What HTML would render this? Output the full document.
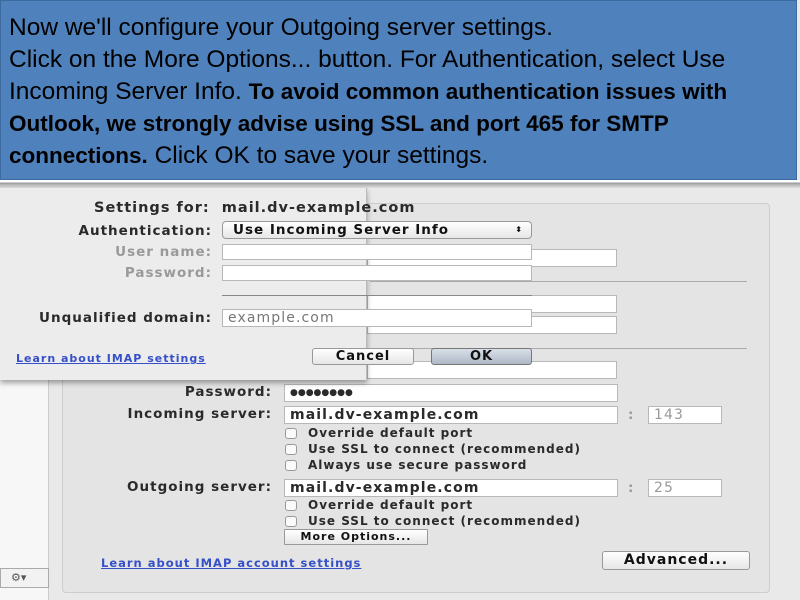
<!DOCTYPE html>
<html><head><style>
*{margin:0;padding:0;box-sizing:border-box}
body{width:800px;height:600px;overflow:hidden;background:#e9e9e9;font-family:"DejaVu Sans",sans-serif;position:relative}
.blue{position:absolute;left:0;top:0;width:797px;height:180px;background:#4f81bd;border:1px solid #3d6a9e;color:#000;font-family:"Liberation Sans",sans-serif;font-size:24.5px;line-height:32px;padding:11px 0 0 8px;white-space:nowrap}
.blue b{font-size:22.5px}
.bar{position:absolute;left:0;top:180px;width:800px;height:8px;background:linear-gradient(#fff 0,#fff 2px,#999 3px,#bbb 5px,#e0e0e0 8px)}
.a{position:absolute;font-size:13.5px;font-weight:bold;color:#2a2a2a;white-space:nowrap;letter-spacing:1px}
.r{text-align:right}
.f{position:absolute;background:#fff;border:1px solid #b8b8b8;height:18px;font-size:14px;font-weight:bold;padding-left:5px;line-height:16px;color:#2a2a2a;letter-spacing:1.1px;white-space:nowrap}
.cb{position:absolute;width:12px;height:11px;border:1px solid #999;border-radius:3px;background:#fafafa}
.ck{font-size:12px}
.btn{position:absolute;background:linear-gradient(#fff,#e6e6e6);border:1px solid #999;border-radius:3px;font-size:13px;font-weight:bold;text-align:center;color:#111;letter-spacing:1px;white-space:nowrap}
.lnk{position:absolute;font-size:11.5px;color:#3550c8;text-decoration:underline;font-weight:bold;letter-spacing:1px;white-space:nowrap}
</style></head><body>
<div class="blue">Now we'll configure your Outgoing server settings.<br>Click on the More Options... button. For Authentication, select Use<br>Incoming Server Info. <b>To avoid common authentication issues with<br>Outlook, we strongly advise using SSL and port 465 for SMTP<br>connections.</b> Click OK to save your settings.</div>
<div class="bar"></div>
<div style="position:absolute;left:0;top:188px;width:49px;height:412px;background:#f7f7f7;border-right:1px solid #ccc"></div>
<div style="position:absolute;left:0;top:568px;width:49px;height:20px;border:1px solid #aaa;background:#f2f2f2;font-size:11px;color:#555;padding:2px 0 0 10px">⚙▾</div>
<div style="position:absolute;left:62px;top:203px;width:708px;height:390px;background:#e4e4e4;border:1px solid #ccc;border-radius:4px"></div>
<div style="position:absolute;left:370px;top:281px;width:377px;border-top:1px solid #aaa"></div>
<div style="position:absolute;left:370px;top:348px;width:377px;border-top:1px solid #aaa"></div>
<div class="f" style="left:367px;top:249px;width:250px"></div>
<div class="f" style="left:367px;top:295px;width:250px"></div>
<div class="f" style="left:367px;top:316px;width:250px"></div>
<div class="f" style="left:367px;top:361px;width:250px"></div>
<div class="a r" style="left:60px;top:384px;width:212px">Password:</div>
<div class="f" style="left:284px;top:384px;width:334px;font-size:9px;letter-spacing:0">●●●●●●●●</div>
<div class="a r" style="left:40px;top:406px;width:232px">Incoming server:</div>
<div class="f" style="left:284px;top:406px;width:334px">mail.dv-example.com</div>
<div class="a" style="left:628px;top:407px;color:#999">:</div>
<div class="f" style="left:648px;top:406px;width:74px;color:#999;font-weight:normal">143</div>
<div class="cb" style="left:285px;top:428px"></div><div class="a ck" style="left:308px;top:426px">Override default port</div>
<div class="cb" style="left:285px;top:444px"></div><div class="a ck" style="left:308px;top:442px">Use SSL to connect (recommended)</div>
<div class="cb" style="left:285px;top:460px"></div><div class="a ck" style="left:308px;top:458px">Always use secure password</div>
<div class="a r" style="left:40px;top:479px;width:232px">Outgoing server:</div>
<div class="f" style="left:284px;top:479px;width:334px">mail.dv-example.com</div>
<div class="a" style="left:628px;top:480px;color:#999">:</div>
<div class="f" style="left:648px;top:479px;width:74px;color:#999;font-weight:normal">25</div>
<div class="cb" style="left:285px;top:500px"></div><div class="a ck" style="left:308px;top:498px">Override default port</div>
<div class="cb" style="left:285px;top:516px"></div><div class="a ck" style="left:308px;top:514px">Use SSL to connect (recommended)</div>
<div class="btn" style="left:284px;top:529px;width:144px;height:16px;font-size:11px;line-height:14px;border-radius:1px">More Options...</div>
<div class="lnk" style="left:101px;top:556px">Learn about IMAP account settings</div>
<div class="btn" style="left:602px;top:551px;width:148px;height:19px;line-height:17px;font-size:14px">Advanced...</div>
<div style="position:absolute;left:0;top:188px;width:367px;height:192px;background:#ececec;border-right:1px solid #bbb;box-shadow:0 3px 5px rgba(0,0,0,.35)"></div>
<div class="a" style="left:94px;top:200px;font-size:14.5px">Settings for:&nbsp; mail.dv-example.com</div>
<div class="a r" style="left:0px;top:223px;width:212px">Authentication:</div>
<div class="btn" style="left:222px;top:221px;width:310px;height:18px;text-align:left;padding-left:10px;line-height:16px;border-radius:4px;font-size:13.5px">Use Incoming Server Info<span style="position:absolute;right:8px;font-size:8px">⬍</span></div>
<div class="a r" style="left:0px;top:244px;width:212px;color:#999">User name:</div>
<div class="f" style="left:222px;top:244px;width:310px;height:16px"></div>
<div class="a r" style="left:0px;top:265px;width:212px;color:#999">Password:</div>
<div class="f" style="left:222px;top:265px;width:310px;height:16px"></div>
<div style="position:absolute;left:222px;top:295px;width:310px;border-top:1px solid #888"></div>
<div class="a r" style="left:0px;top:310px;width:212px">Unqualified domain:</div>
<div class="f" style="left:222px;top:309px;width:310px;color:#777;font-weight:normal">example.com</div>
<div class="lnk" style="left:16px;top:352px;font-size:11px">Learn about IMAP settings</div>
<div class="btn" style="left:312px;top:348px;width:102px;height:17px;line-height:15px">Cancel</div>
<div class="btn" style="left:431px;top:348px;width:101px;height:17px;line-height:15px;background:linear-gradient(#d8dfe8,#aeb8c6);border-color:#777">OK</div>
</body></html>
